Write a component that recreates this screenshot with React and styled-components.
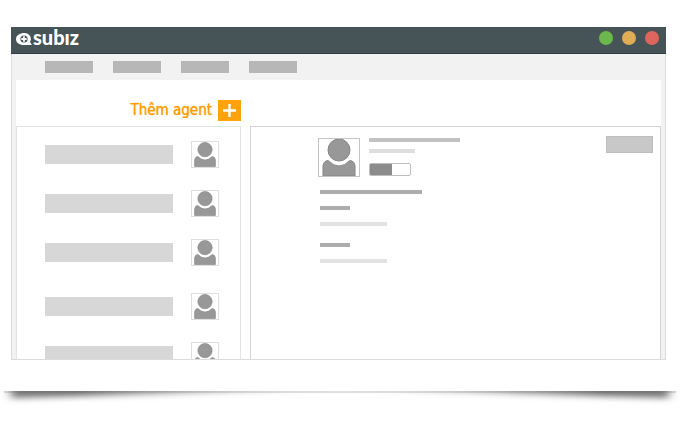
import styled, { createGlobalStyle } from 'styled-components'

const rowGroups = [
  ['agent-1', 'agent-2', 'agent-3'],
  ['agent-4', 'agent-5'],
];

function Person() {
  return (
    <svg viewBox="1 1 40 37" width="100%" height="100%" fill="#989898" stroke="#868686" aria-hidden="true">
      <circle cx="21" cy="12" r="11" />
      <path d="M5 38V28Q5.500 23 10 22.500Q21 33.500 32 22.500Q36.500 23 37 28V38Z" />
    </svg>
  )
}

function App() {
  return (
    <>
      <GlobalStyle />
      <Page>
        <Window>
          <TitleBar>
            <Logo href="#">
              <svg width="16" height="12" viewBox="0 0 16 12" aria-hidden="true">
                <path fill="#fff" d="M8.500 0A6.500 6 0 0 1 14 9L16 12H8C3 12 0 9.500 0 6C0 2.500 4 0 8.500 0Z" />
                <circle cx="8" cy="6" r="3.600" fill="#465457" />
                <path d="M5.300 6H10.700M8 3.300V8.700" stroke="#fff" strokeWidth="1.800" />
              </svg>
              subız
            </Logo>
            <Controls>
              <Dot type="button" aria-label="Minimize" $color="#6cb84a" />
              <Dot type="button" aria-label="Maximize" $color="#e0ac56" />
              <Dot type="button" aria-label="Close" $color="#de655d" />
            </Controls>
          </TitleBar>
          <Nav>
            <NavLink href="#" aria-label="Menu 1" />
            <NavLink href="#" aria-label="Menu 2" />
            <NavLink href="#" aria-label="Menu 3" />
            <NavLink href="#" aria-label="Menu 4" />
          </Nav>
          <Content>
            <Toolbar>
              <AddAgent type="button">
                Thêm agent
                <svg width="23" height="21" viewBox="0 0 23 21" aria-hidden="true">
                  <path fill="#ffa20d" d="M0 0H23V21H0Z" />
                  <path stroke="#fff" strokeWidth="2.400" d="M5 10.500H18M11.500 4V17" />
                </svg>
              </AddAgent>
            </Toolbar>
            <Panels>
              <AgentList>
                {rowGroups.map((group) => (
                  <AgentGroup key={group[0]}>
                    {group.map((id) => (
                      <AgentRow key={id}>
                        <NameBar />
                        <Avatar><Person /></Avatar>
                      </AgentRow>
                    ))}
                  </AgentGroup>
                ))}
              </AgentList>
              <Detail>
                <Profile>
                  <Summary>
                    <Avatar $large><Person /></Avatar>
                    <Lines>
                      <Line $width={91} $color="#c2c2c2" />
                      <Line $width={46} $color="#dedede" />
                      <Toggle type="checkbox" aria-label="Status" defaultChecked />
                    </Lines>
                  </Summary>
                  <Fields>
                    <FieldGroup>
                      <Line $width={102} $color="#adadad" />
                      <Line $width={30} $color="#adadad" />
                      <Line $width={67} $color="#e3e3e3" />
                    </FieldGroup>
                    <FieldGroup>
                      <Line $width={30} $color="#adadad" />
                      <Line $width={67} $color="#e3e3e3" />
                    </FieldGroup>
                  </Fields>
                </Profile>
                <Action type="button" aria-label="Edit" />
              </Detail>
            </Panels>
          </Content>
        </Window>
        <PaperEdge viewBox="0 0 680 16" preserveAspectRatio="none" aria-hidden="true">
          <defs>
            <linearGradient id="across">
              <stop offset="0" stopColor="#777" />
              <stop offset="0.100" stopColor="#6c6c6c" />
              <stop offset="0.220" stopColor="#909090" />
              <stop offset="0.370" stopColor="#c4c4c4" />
              <stop offset="0.500" stopColor="#eee" />
              <stop offset="0.630" stopColor="#c4c4c4" />
              <stop offset="0.780" stopColor="#909090" />
              <stop offset="0.900" stopColor="#6c6c6c" />
              <stop offset="1" stopColor="#777" />
            </linearGradient>
            <clipPath id="below"><path d="M0 0H680V16H0Z" /></clipPath>
            <filter id="soft" x="-5%" y="-100%" width="110%" height="300%" colorInterpolationFilters="sRGB">
              <feGaussianBlur stdDeviation="5 3" />
            </filter>
          </defs>
          <path d="M4 0H676V2H4Z" fill="#dedede" />
          <g clipPath="url(#below)">
            <path d="M11 -8H669V7L340 -3L11 7Z" fill="url(#across)" filter="url(#soft)" />
          </g>
        </PaperEdge>
      </Page>
    </>
  )
}

export default App

const GlobalStyle = createGlobalStyle`
* {
  box-sizing: border-box;
}

body {
  margin: 0;
  background: #fff;
  font-family: "Noto Sans", sans-serif;
}

button {
  border: none;
  padding: 0;
}
`;

const Page = styled.div`
min-height: 360px;
height: 100vh;
display: flex;
flex-direction: column;
padding: 27px 0 14px;
`;

const Window = styled.main`
flex: 1;
min-height: 0;
display: flex;
flex-direction: column;
margin: 0 14px 31px 11px;
`;

const TitleBar = styled.header`
height: 27px;
flex: none;
display: flex;
justify-content: space-between;
padding: 0 7px 0 5px;
background: #465457;
border-bottom: 1px solid #2f3f46;
`;

const Logo = styled.a`
display: flex;
align-items: baseline;
gap: 1px;
color: #fff;
font: 900 20px/20px Lato, sans-serif;
text-decoration: none;
`;

const Controls = styled.div`
display: flex;
gap: 9px;
padding-top: 4px;
`;

const Dot = styled.button`
width: 14px;
height: 14px;
border-radius: 50%;
background: ${(props) => props.$color};
`;

const Nav = styled.nav`
height: 26px;
flex: none;
display: flex;
gap: 20px;
padding: 7px 33px;
background: #f2f2f2;
border: 1px solid #ddd;
border-width: 0 1px;
`;

const NavLink = styled.a`
width: 48px;
height: 12px;
background: #b7b7b7;
`;

const Content = styled.div`
flex: 1;
min-height: 0;
display: flex;
flex-direction: column;
border: solid #dcdcdc;
border-width: 0 1px 1px;
padding: 0 4px;
background: linear-gradient(#fff, #fff) center / calc(100% - 8px) 100% no-repeat #f2f2f2;
`;

const Toolbar = styled.div`
height: 46px;
width: 225px;
flex: none;
display: flex;
justify-content: flex-end;
padding-top: 20px;
`;

const AddAgent = styled.button`
display: flex;
align-items: center;
gap: 6px;
height: 21px;
background: none;
color: #ff9c0a;
font: 15px/21px "DejaVu Sans Condensed", "DejaVu Sans", sans-serif;
text-shadow: 0 0 1px #ff9c0a;
`;

const Panels = styled.div`
flex: 1;
min-height: 0;
display: flex;
gap: 9px;
`;

const AgentList = styled.section`
width: 225px;
flex: none;
display: flex;
flex-direction: column;
gap: 27px;
padding: 14px 21px 0 28px;
border: 1px solid #e4e4e4;
border-bottom: none;
overflow: hidden;
`;

const AgentGroup = styled.div`
display: flex;
flex-direction: column;
gap: 22px;
`;

const AgentRow = styled.div`
display: flex;
justify-content: space-between;
height: 27px;
`;

const NameBar = styled.div`
width: 128px;
height: 19px;
margin-top: 4px;
background: #d7d7d7;
`;

const Avatar = styled.div`
width: ${(props) => (props.$large ? '42px' : '28px')};
height: ${(props) => (props.$large ? '39px' : '27px')};
border: 1px solid ${(props) => (props.$large ? '#c4c4c4' : '#dedede')};

svg {
  display: block;
}
`;

const Detail = styled.section`
flex: 1;
display: flex;
justify-content: space-between;
align-items: flex-start;
padding: 9px 7px 0 67px;
border: 1px solid #d4d4d4;
border-bottom: none;
overflow: hidden;
`;

const Profile = styled.div`
padding-top: 2px;
`;

const Summary = styled.div`
display: flex;
gap: 9px;
`;

const Lines = styled.div`
display: flex;
flex-direction: column;
gap: 7px;
`;

const Line = styled.div`
width: ${(props) => props.$width}px;
height: 4px;
background: ${(props) => props.$color};
`;

const Toggle = styled.input`
appearance: none;
width: 42px;
height: 13px;
margin: 3px 0 0;
border: 1px solid #bdbdbd;
border-radius: 2px;
background: linear-gradient(90deg, #8b8b8b 22px, #fff 22px);
`;

const Fields = styled.div`
display: flex;
flex-direction: column;
gap: 17px;
padding: 13px 0 0 2px;
`;

const FieldGroup = styled.div`
display: flex;
flex-direction: column;
gap: 12px;
`;

const Action = styled.button`
width: 47px;
height: 17px;
background: #c8c8c8;
border: 1px solid #bdbdbd;
`;

const PaperEdge = styled.svg`
display: block;
width: 100%;
height: 16px;
flex: none;
`;
